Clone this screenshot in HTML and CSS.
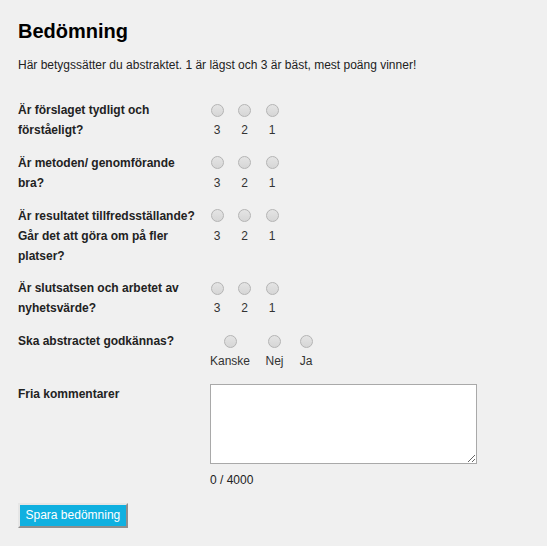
FILE: index.html
```html
<!DOCTYPE html>
<html lang="sv">
<head>
<meta charset="utf-8">
<title>Bedömning</title>
<link rel="stylesheet" href="styles.css">
</head>
<body>
<div class="page">
  <h1 class="title">Bedömning</h1>
  <p class="intro">Här betygssätter du abstraktet. 1 är lägst och 3 är bäst, mest poäng vinner!</p>
  <form class="form">
    <div class="q">Är förslaget tydligt och förståeligt?</div>
    <div class="opts">
      <label class="opt"><span class="rb"><input type="radio" name="q1"></span><span class="ol">3</span></label>
      <label class="opt"><span class="rb"><input type="radio" name="q1"></span><span class="ol">2</span></label>
      <label class="opt"><span class="rb"><input type="radio" name="q1"></span><span class="ol">1</span></label>
    </div>

    <div class="q">Är metoden/ genomförande bra?</div>
    <div class="opts">
      <label class="opt"><span class="rb"><input type="radio" name="q2"></span><span class="ol">3</span></label>
      <label class="opt"><span class="rb"><input type="radio" name="q2"></span><span class="ol">2</span></label>
      <label class="opt"><span class="rb"><input type="radio" name="q2"></span><span class="ol">1</span></label>
    </div>

    <div class="q">Är resultatet tillfredsställande? Går det att göra om på fler platser?</div>
    <div class="opts">
      <label class="opt"><span class="rb"><input type="radio" name="q3"></span><span class="ol">3</span></label>
      <label class="opt"><span class="rb"><input type="radio" name="q3"></span><span class="ol">2</span></label>
      <label class="opt"><span class="rb"><input type="radio" name="q3"></span><span class="ol">1</span></label>
    </div>

    <div class="q">Är slutsatsen och arbetet av nyhetsvärde?</div>
    <div class="opts">
      <label class="opt"><span class="rb"><input type="radio" name="q4"></span><span class="ol">3</span></label>
      <label class="opt"><span class="rb"><input type="radio" name="q4"></span><span class="ol">2</span></label>
      <label class="opt"><span class="rb"><input type="radio" name="q4"></span><span class="ol">1</span></label>
    </div>

    <div class="q">Ska abstractet godkännas?</div>
    <div class="opts wide">
      <label class="opt"><span class="rb"><input type="radio" name="q5"></span><span class="ol">Kanske</span></label>
      <label class="opt"><span class="rb"><input type="radio" name="q5"></span><span class="ol">Nej</span></label>
      <label class="opt"><span class="rb"><input type="radio" name="q5"></span><span class="ol">Ja</span></label>
    </div>

    <div class="q">Fria kommentarer</div>
    <div class="comment">
      <textarea class="ta"></textarea>
      <div class="counter">0 / 4000</div>
    </div>
  </form>
  <button class="save" type="button">Spara bedömning</button>
</div>
</body>
</html>
```
FILE: styles.css
```css
html, body {
  margin: 0;
  padding: 0;
  background: #f0f0f0;
}
body {
  font-family: "Liberation Sans", Arial, sans-serif;
  font-size: 12px;
  color: #222;
}
.page {
  padding: 19px 18px 18px 18px;
}
.title {
  margin: 0;
  font-size: 20px;
  line-height: 24px;
  font-weight: bold;
  color: #000;
}
.intro {
  margin: 12px 0 0 0;
  line-height: 20px;
}
.form {
  margin-top: 25px;
  display: grid;
  grid-template-columns: 192px auto;
  row-gap: 12.75px;
  align-items: start;
}
.q {
  font-weight: bold;
  line-height: 20px;
  padding-right: 12px;
}
.opts {
  display: flex;
  gap: 13.5px;
}
.opts.wide {
  gap: 15.5px;
}
.opt {
  display: flex;
  flex-direction: column;
  align-items: center;
  min-width: 14px;
}
.rb {
  height: 20px;
  display: flex;
  align-items: center;
  justify-content: center;
}
.rb input {
  -webkit-appearance: none;
  appearance: none;
  margin: 0;
  width: 13px;
  height: 13px;
  border-radius: 50%;
  border: 1px solid #b4b4b4;
  background: linear-gradient(#e4e4e4, #d6d6d6);
  box-sizing: border-box;
}
.ol {
  line-height: 20px;
  color: #333;
}
.comment {
  display: flex;
  flex-direction: column;
}
.ta {
  width: 267px;
  height: 80px;
  box-sizing: border-box;
  border: 1px solid #a9a9a9;
  background: #fff;
  margin: 0;
  font-family: inherit;
  font-size: 12px;
  border-radius: 0;
}
.counter {
  margin-top: 6px;
  line-height: 20px;
  color: #222;
}
.save {
  margin-top: 13px;
  height: 25px;
  padding: 0 5.5px;
  font-family: "Liberation Sans", Arial, sans-serif;
  font-size: 12px;
  color: #fff;
  background: #0fb0e0;
  border-style: solid;
  border-width: 2px;
  border-color: #e6e6e6 #8e8e8e #8e8e8e #e6e6e6;
  border-radius: 0;
  display: block;
}
```
